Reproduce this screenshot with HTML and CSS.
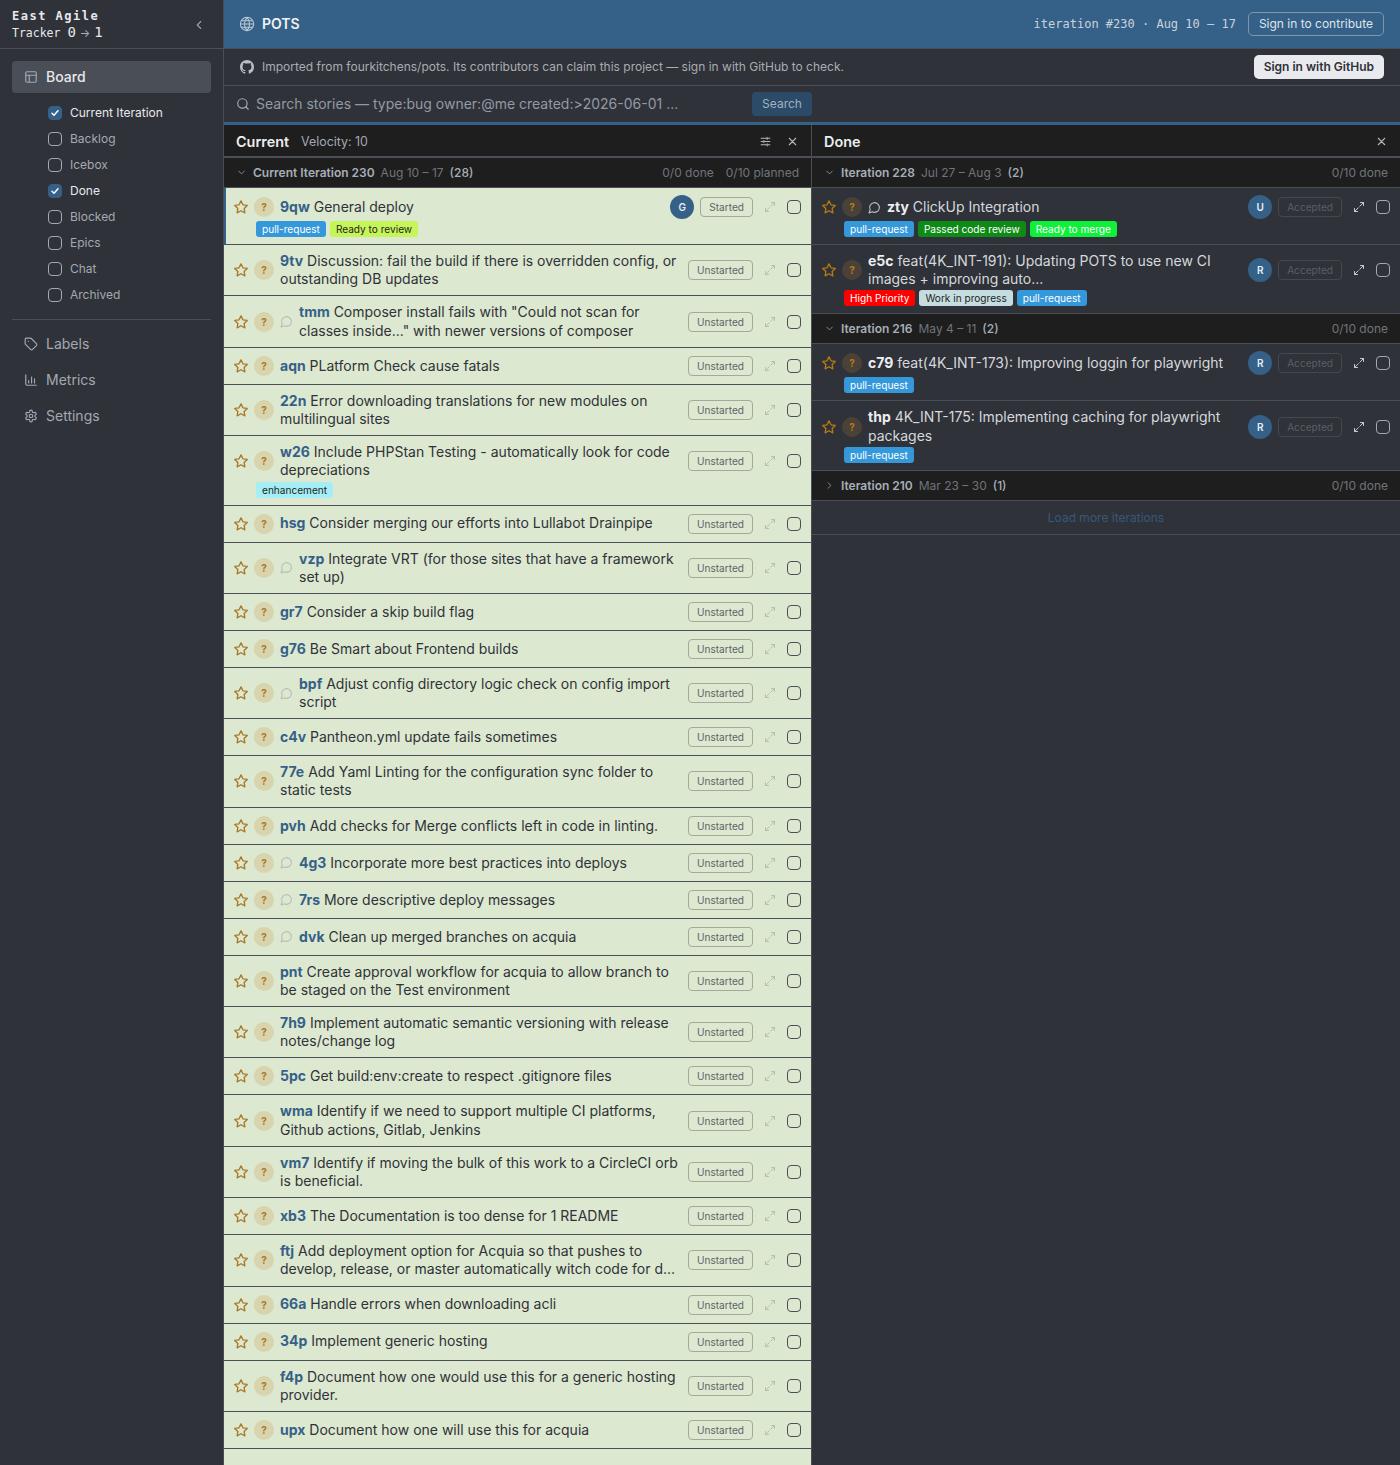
FILE: index.html
```html
<!DOCTYPE html>
<html>
<head>
    <title>POTS - East Agile Tracker</title>
    <link rel="stylesheet" href="styles.css">
</head>
<body>
    <svg class="sprites" width="0" height="0">
        <symbol id="i-star" viewBox="0 0 24 24"><path d="M12 2.8l2.9 5.9 6.5.9-4.7 4.6 1.1 6.5-5.8-3.1-5.8 3.1 1.1-6.5-4.7-4.6 6.5-.9z" fill="none" stroke="currentColor" stroke-width="2" stroke-linejoin="round"/></symbol>
        <symbol id="i-chat" viewBox="0 0 24 24"><path d="M7.9 20A9 9 0 1 0 4 16.1L2 22z" fill="none" stroke="currentColor" stroke-width="2" stroke-linejoin="round"/></symbol>
        <symbol id="i-expand" viewBox="0 0 24 24"><path d="M15 3h6v6M21 3l-7.5 7.5M9 21H3v-6M3 21l7.5-7.5" fill="none" stroke="currentColor" stroke-width="2" stroke-linecap="round" stroke-linejoin="round"/></symbol>
        <symbol id="i-close" viewBox="0 0 24 24"><path d="M18 6L6 18M6 6l12 12" fill="none" stroke="currentColor" stroke-width="2" stroke-linecap="round"/></symbol>
        <symbol id="i-down" viewBox="0 0 24 24"><path d="M6 9l6 6 6-6" fill="none" stroke="currentColor" stroke-width="2" stroke-linecap="round" stroke-linejoin="round"/></symbol>
        <symbol id="i-right" viewBox="0 0 24 24"><path d="M9 6l6 6-6 6" fill="none" stroke="currentColor" stroke-width="2" stroke-linecap="round" stroke-linejoin="round"/></symbol>
    </svg>

    <div class="app">
        <aside class="sidebar">
            <div class="brand">
                <div class="brand-text">
                    <div class="brand-top">East Agile</div>
                    <div class="brand-bottom">Tracker <span class="brand-num">0<span class="brand-arrow">→</span>1</span></div>
                </div>
                <svg class="brand-toggle" viewBox="0 0 24 24"><path d="M15 6l-6 6 6 6" fill="none" stroke="currentColor" stroke-width="2" stroke-linecap="round" stroke-linejoin="round"/></svg>
            </div>

            <nav class="nav">
                <div class="nav-item active">
                    <svg class="nav-icon" viewBox="0 0 24 24"><rect x="3" y="3" width="18" height="18" rx="2" fill="none" stroke="currentColor" stroke-width="2"/><path d="M3 9h18M9 9v12" fill="none" stroke="currentColor" stroke-width="2"/></svg>
                    Board
                </div>
                <div class="panel-list">
                    <div class="panel-opt on"><span class="check on"><svg viewBox="0 0 24 24"><path d="M6 12.5l4 4 8-9" fill="none" stroke="#fff" stroke-width="3" stroke-linecap="round" stroke-linejoin="round"/></svg></span>Current Iteration</div>
                    <div class="panel-opt"><span class="check"></span>Backlog</div>
                    <div class="panel-opt"><span class="check"></span>Icebox</div>
                    <div class="panel-opt on"><span class="check on"><svg viewBox="0 0 24 24"><path d="M6 12.5l4 4 8-9" fill="none" stroke="#fff" stroke-width="3" stroke-linecap="round" stroke-linejoin="round"/></svg></span>Done</div>
                    <div class="panel-opt"><span class="check"></span>Blocked</div>
                    <div class="panel-opt"><span class="check"></span>Epics</div>
                    <div class="panel-opt"><span class="check"></span>Chat</div>
                    <div class="panel-opt"><span class="check"></span>Archived</div>
                </div>
                <div class="nav-divider"></div>
                <div class="nav-item">
                    <svg class="nav-icon" viewBox="0 0 24 24"><path d="M12.6 2.6A2 2 0 0 0 11.2 2H4a2 2 0 0 0-2 2v7.2c0 .5.2 1 .6 1.4l8.7 8.7a2.4 2.4 0 0 0 3.4 0l6.6-6.6a2.4 2.4 0 0 0 0-3.4z" fill="none" stroke="currentColor" stroke-width="2" stroke-linejoin="round"/><circle cx="7.5" cy="7.5" r="1" fill="currentColor"/></svg>
                    Labels
                </div>
                <div class="nav-item">
                    <svg class="nav-icon" viewBox="0 0 24 24"><path d="M3 3v16a2 2 0 0 0 2 2h16M8 17v-4M13 17V7M18 17v-7" fill="none" stroke="currentColor" stroke-width="2" stroke-linecap="round"/></svg>
                    Metrics
                </div>
                <div class="nav-item">
                    <svg class="nav-icon" viewBox="0 0 24 24"><path d="M12.2 2h-.4a2 2 0 0 0-2 2v.2a2 2 0 0 1-1 1.7l-.4.3a2 2 0 0 1-2 0l-.2-.1a2 2 0 0 0-2.7.7l-.2.4a2 2 0 0 0 .7 2.7l.2.1a2 2 0 0 1 1 1.7v.6a2 2 0 0 1-1 1.7l-.2.1a2 2 0 0 0-.7 2.7l.2.4a2 2 0 0 0 2.7.7l.2-.1a2 2 0 0 1 2 0l.4.3a2 2 0 0 1 1 1.7v.2a2 2 0 0 0 2 2h.4a2 2 0 0 0 2-2v-.2a2 2 0 0 1 1-1.7l.4-.3a2 2 0 0 1 2 0l.2.1a2 2 0 0 0 2.7-.7l.2-.4a2 2 0 0 0-.7-2.7l-.2-.1a2 2 0 0 1-1-1.7v-.6a2 2 0 0 1 1-1.7l.2-.1a2 2 0 0 0 .7-2.7l-.2-.4a2 2 0 0 0-2.7-.7l-.2.1a2 2 0 0 1-2 0l-.4-.3a2 2 0 0 1-1-1.7V4a2 2 0 0 0-2-2z" fill="none" stroke="currentColor" stroke-width="2"/><circle cx="12" cy="12" r="3" fill="none" stroke="currentColor" stroke-width="2"/></svg>
                    Settings
                </div>
            </nav>
        </aside>

        <main class="main">
            <header class="topbar">
                <svg class="globe" viewBox="0 0 24 24"><circle cx="12" cy="12" r="10" fill="none" stroke="currentColor" stroke-width="1.6"/><path d="M2 12h20M12 2a15 15 0 0 1 0 20a15 15 0 0 1 0-20M3.5 7h17M3.5 17h17" fill="none" stroke="currentColor" stroke-width="1.6"/></svg>
                <span class="project-name">POTS</span>
                <span class="iteration-info">iteration #230 · Aug 10 – 17</span>
                <button class="btn-outline">Sign in to contribute</button>
            </header>

            <div class="notice">
                <svg class="github" viewBox="0 0 16 16"><path fill="currentColor" d="M8 0C3.58 0 0 3.58 0 8c0 3.54 2.29 6.53 5.47 7.59.4.07.55-.17.55-.38 0-.19-.01-.82-.01-1.49-2.01.37-2.53-.49-2.69-.94-.09-.23-.48-.94-.82-1.13-.28-.15-.68-.52-.01-.53.63-.01 1.08.58 1.23.82.72 1.21 1.87.87 2.33.66.07-.52.28-.87.51-1.07-1.78-.2-3.64-.89-3.64-3.95 0-.87.31-1.59.82-2.15-.08-.2-.36-1.02.08-2.12 0 0 .67-.21 2.2.82.64-.18 1.32-.27 2-.27s1.36.09 2 .27c1.53-1.04 2.2-.82 2.2-.82.44 1.1.16 1.92.08 2.12.51.56.82 1.27.82 2.15 0 3.07-1.87 3.75-3.65 3.95.29.25.54.73.54 1.48 0 1.07-.01 1.93-.01 2.2 0 .21.15.46.55.38A8.01 8.01 0 0 0 16 8c0-4.42-3.58-8-8-8z"/></svg>
                <span class="notice-text">Imported from fourkitchens/pots. Its contributors can claim this project — sign in with GitHub to check.</span>
                <button class="btn-light">Sign in with GitHub</button>
            </div>

            <div class="searchbar">
                <svg class="search-icon" viewBox="0 0 24 24"><circle cx="11" cy="11" r="8" fill="none" stroke="currentColor" stroke-width="2"/><path d="M21 21l-4.3-4.3" fill="none" stroke="currentColor" stroke-width="2" stroke-linecap="round"/></svg>
                <span class="search-text">Search stories — type:bug owner:@me created:&gt;2026-06-01 ...</span>
                <button class="btn-search">Search</button>
            </div>

            <div class="panels">
                <section class="panel current">
                    <div class="panel-head">
                        <span class="panel-title">Current</span>
                        <span class="velocity">Velocity: 10</span>
                        <svg class="head-icon sliders" viewBox="0 0 24 24"><path d="M4 6h9M17 6h3M4 12h3M11 12h9M4 18h9M17 18h3M15 4v4M9 10v4M15 16v4" fill="none" stroke="currentColor" stroke-width="2" stroke-linecap="round"/></svg>
                        <svg class="head-icon"><use href="#i-close"/></svg>
                    </div>
                    <div class="iter-head">
                        <svg class="iter-caret"><use href="#i-down"/></svg>
                        <span class="iter-name">Current Iteration 230</span>
                        <span class="iter-date">Aug 10 – 17</span>
                        <span class="iter-count">(28)</span>
                        <span class="iter-stats">0/0 done</span>
                        <span class="iter-stats">0/10 planned</span>
                    </div>

                    <div class="story selected">
                        <div class="story-line">
                            <svg class="star"><use href="#i-star"/></svg><span class="est">?</span>
                            <div class="story-title"><b>9qw</b> General deploy</div>
                            <span class="avatar">G</span>
                            <span class="status">Started</span>
                            <svg class="expand"><use href="#i-expand"/></svg><span class="select"></span>
                        </div>
                        <div class="labels"><span class="label l-blue">pull-request</span><span class="label l-lime">Ready to review</span></div>
                    </div>
                    <div class="story">
                        <div class="story-line">
                            <svg class="star"><use href="#i-star"/></svg><span class="est">?</span>
                            <div class="story-title"><b>9tv</b> Discussion: fail the build if there is overridden config, or outstanding DB updates</div>
                            <span class="status">Unstarted</span>
                            <svg class="expand"><use href="#i-expand"/></svg><span class="select"></span>
                        </div>
                    </div>
                    <div class="story">
                        <div class="story-line">
                            <svg class="star"><use href="#i-star"/></svg><span class="est">?</span><svg class="chat"><use href="#i-chat"/></svg>
                            <div class="story-title"><b>tmm</b> Composer install fails with "Could not scan for classes inside..." with newer versions of composer</div>
                            <span class="status">Unstarted</span>
                            <svg class="expand"><use href="#i-expand"/></svg><span class="select"></span>
                        </div>
                    </div>
                    <div class="story">
                        <div class="story-line">
                            <svg class="star"><use href="#i-star"/></svg><span class="est">?</span>
                            <div class="story-title"><b>aqn</b> PLatform Check cause fatals</div>
                            <span class="status">Unstarted</span>
                            <svg class="expand"><use href="#i-expand"/></svg><span class="select"></span>
                        </div>
                    </div>
                    <div class="story">
                        <div class="story-line">
                            <svg class="star"><use href="#i-star"/></svg><span class="est">?</span>
                            <div class="story-title"><b>22n</b> Error downloading translations for new modules on multilingual sites</div>
                            <span class="status">Unstarted</span>
                            <svg class="expand"><use href="#i-expand"/></svg><span class="select"></span>
                        </div>
                    </div>
                    <div class="story">
                        <div class="story-line">
                            <svg class="star"><use href="#i-star"/></svg><span class="est">?</span>
                            <div class="story-title"><b>w26</b> Include PHPStan Testing - automatically look for code depreciations</div>
                            <span class="status">Unstarted</span>
                            <svg class="expand"><use href="#i-expand"/></svg><span class="select"></span>
                        </div>
                        <div class="labels"><span class="label l-cyan">enhancement</span></div>
                    </div>
                    <div class="story">
                        <div class="story-line">
                            <svg class="star"><use href="#i-star"/></svg><span class="est">?</span>
                            <div class="story-title"><b>hsg</b> Consider merging our efforts into Lullabot Drainpipe</div>
                            <span class="status">Unstarted</span>
                            <svg class="expand"><use href="#i-expand"/></svg><span class="select"></span>
                        </div>
                    </div>
                    <div class="story">
                        <div class="story-line">
                            <svg class="star"><use href="#i-star"/></svg><span class="est">?</span><svg class="chat"><use href="#i-chat"/></svg>
                            <div class="story-title"><b>vzp</b> Integrate VRT (for those sites that have a framework set up)</div>
                            <span class="status">Unstarted</span>
                            <svg class="expand"><use href="#i-expand"/></svg><span class="select"></span>
                        </div>
                    </div>
                    <div class="story">
                        <div class="story-line">
                            <svg class="star"><use href="#i-star"/></svg><span class="est">?</span>
                            <div class="story-title"><b>gr7</b> Consider a skip build flag</div>
                            <span class="status">Unstarted</span>
                            <svg class="expand"><use href="#i-expand"/></svg><span class="select"></span>
                        </div>
                    </div>
                    <div class="story">
                        <div class="story-line">
                            <svg class="star"><use href="#i-star"/></svg><span class="est">?</span>
                            <div class="story-title"><b>g76</b> Be Smart about Frontend builds</div>
                            <span class="status">Unstarted</span>
                            <svg class="expand"><use href="#i-expand"/></svg><span class="select"></span>
                        </div>
                    </div>
                    <div class="story">
                        <div class="story-line">
                            <svg class="star"><use href="#i-star"/></svg><span class="est">?</span><svg class="chat"><use href="#i-chat"/></svg>
                            <div class="story-title"><b>bpf</b> Adjust config directory logic check on config import script</div>
                            <span class="status">Unstarted</span>
                            <svg class="expand"><use href="#i-expand"/></svg><span class="select"></span>
                        </div>
                    </div>
                    <div class="story">
                        <div class="story-line">
                            <svg class="star"><use href="#i-star"/></svg><span class="est">?</span>
                            <div class="story-title"><b>c4v</b> Pantheon.yml update fails sometimes</div>
                            <span class="status">Unstarted</span>
                            <svg class="expand"><use href="#i-expand"/></svg><span class="select"></span>
                        </div>
                    </div>
                    <div class="story">
                        <div class="story-line">
                            <svg class="star"><use href="#i-star"/></svg><span class="est">?</span>
                            <div class="story-title"><b>77e</b> Add Yaml Linting for the configuration sync folder to static tests</div>
                            <span class="status">Unstarted</span>
                            <svg class="expand"><use href="#i-expand"/></svg><span class="select"></span>
                        </div>
                    </div>
                    <div class="story">
                        <div class="story-line">
                            <svg class="star"><use href="#i-star"/></svg><span class="est">?</span>
                            <div class="story-title"><b>pvh</b> Add checks for Merge conflicts left in code in linting.</div>
                            <span class="status">Unstarted</span>
                            <svg class="expand"><use href="#i-expand"/></svg><span class="select"></span>
                        </div>
                    </div>
                    <div class="story">
                        <div class="story-line">
                            <svg class="star"><use href="#i-star"/></svg><span class="est">?</span><svg class="chat"><use href="#i-chat"/></svg>
                            <div class="story-title"><b>4g3</b> Incorporate more best practices into deploys</div>
                            <span class="status">Unstarted</span>
                            <svg class="expand"><use href="#i-expand"/></svg><span class="select"></span>
                        </div>
                    </div>
                    <div class="story">
                        <div class="story-line">
                            <svg class="star"><use href="#i-star"/></svg><span class="est">?</span><svg class="chat"><use href="#i-chat"/></svg>
                            <div class="story-title"><b>7rs</b> More descriptive deploy messages</div>
                            <span class="status">Unstarted</span>
                            <svg class="expand"><use href="#i-expand"/></svg><span class="select"></span>
                        </div>
                    </div>
                    <div class="story">
                        <div class="story-line">
                            <svg class="star"><use href="#i-star"/></svg><span class="est">?</span><svg class="chat"><use href="#i-chat"/></svg>
                            <div class="story-title"><b>dvk</b> Clean up merged branches on acquia</div>
                            <span class="status">Unstarted</span>
                            <svg class="expand"><use href="#i-expand"/></svg><span class="select"></span>
                        </div>
                    </div>
                    <div class="story">
                        <div class="story-line">
                            <svg class="star"><use href="#i-star"/></svg><span class="est">?</span>
                            <div class="story-title"><b>pnt</b> Create approval workflow for acquia to allow branch to be staged on the Test environment</div>
                            <span class="status">Unstarted</span>
                            <svg class="expand"><use href="#i-expand"/></svg><span class="select"></span>
                        </div>
                    </div>
                    <div class="story">
                        <div class="story-line">
                            <svg class="star"><use href="#i-star"/></svg><span class="est">?</span>
                            <div class="story-title"><b>7h9</b> Implement automatic semantic versioning with release notes/change log</div>
                            <span class="status">Unstarted</span>
                            <svg class="expand"><use href="#i-expand"/></svg><span class="select"></span>
                        </div>
                    </div>
                    <div class="story">
                        <div class="story-line">
                            <svg class="star"><use href="#i-star"/></svg><span class="est">?</span>
                            <div class="story-title"><b>5pc</b> Get build:env:create to respect .gitignore files</div>
                            <span class="status">Unstarted</span>
                            <svg class="expand"><use href="#i-expand"/></svg><span class="select"></span>
                        </div>
                    </div>
                    <div class="story">
                        <div class="story-line">
                            <svg class="star"><use href="#i-star"/></svg><span class="est">?</span>
                            <div class="story-title"><b>wma</b> Identify if we need to support multiple CI platforms, Github actions, Gitlab, Jenkins</div>
                            <span class="status">Unstarted</span>
                            <svg class="expand"><use href="#i-expand"/></svg><span class="select"></span>
                        </div>
                    </div>
                    <div class="story">
                        <div class="story-line">
                            <svg class="star"><use href="#i-star"/></svg><span class="est">?</span>
                            <div class="story-title"><b>vm7</b> Identify if moving the bulk of this work to a CircleCI orb is beneficial.</div>
                            <span class="status">Unstarted</span>
                            <svg class="expand"><use href="#i-expand"/></svg><span class="select"></span>
                        </div>
                    </div>
                    <div class="story">
                        <div class="story-line">
                            <svg class="star"><use href="#i-star"/></svg><span class="est">?</span>
                            <div class="story-title"><b>xb3</b> The Documentation is too dense for 1 README</div>
                            <span class="status">Unstarted</span>
                            <svg class="expand"><use href="#i-expand"/></svg><span class="select"></span>
                        </div>
                    </div>
                    <div class="story">
                        <div class="story-line">
                            <svg class="star"><use href="#i-star"/></svg><span class="est">?</span>
                            <div class="story-title"><b>ftj</b> Add deployment option for Acquia so that pushes to develop, release, or master automatically witch code for d...</div>
                            <span class="status">Unstarted</span>
                            <svg class="expand"><use href="#i-expand"/></svg><span class="select"></span>
                        </div>
                    </div>
                    <div class="story">
                        <div class="story-line">
                            <svg class="star"><use href="#i-star"/></svg><span class="est">?</span>
                            <div class="story-title"><b>66a</b> Handle errors when downloading acli</div>
                            <span class="status">Unstarted</span>
                            <svg class="expand"><use href="#i-expand"/></svg><span class="select"></span>
                        </div>
                    </div>
                    <div class="story">
                        <div class="story-line">
                            <svg class="star"><use href="#i-star"/></svg><span class="est">?</span>
                            <div class="story-title"><b>34p</b> Implement generic hosting</div>
                            <span class="status">Unstarted</span>
                            <svg class="expand"><use href="#i-expand"/></svg><span class="select"></span>
                        </div>
                    </div>
                    <div class="story">
                        <div class="story-line">
                            <svg class="star"><use href="#i-star"/></svg><span class="est">?</span>
                            <div class="story-title"><b>f4p</b> Document how one would use this for a generic hosting provider.</div>
                            <span class="status">Unstarted</span>
                            <svg class="expand"><use href="#i-expand"/></svg><span class="select"></span>
                        </div>
                    </div>
                    <div class="story">
                        <div class="story-line">
                            <svg class="star"><use href="#i-star"/></svg><span class="est">?</span>
                            <div class="story-title"><b>upx</b> Document how one will use this for acquia</div>
                            <span class="status">Unstarted</span>
                            <svg class="expand"><use href="#i-expand"/></svg><span class="select"></span>
                        </div>
                    </div>
                </section>

                <section class="panel done">
                    <div class="panel-head">
                        <span class="panel-title">Done</span>
                        <svg class="head-icon push"><use href="#i-close"/></svg>
                    </div>

                    <div class="iter-head">
                        <svg class="iter-caret"><use href="#i-down"/></svg>
                        <span class="iter-name">Iteration 228</span>
                        <span class="iter-date">Jul 27 – Aug 3</span>
                        <span class="iter-count">(2)</span>
                        <span class="iter-stats">0/10 done</span>
                    </div>
                    <div class="story">
                        <div class="story-line">
                            <svg class="star"><use href="#i-star"/></svg><span class="est">?</span><svg class="chat"><use href="#i-chat"/></svg>
                            <div class="story-title"><b>zty</b> ClickUp Integration</div>
                            <span class="avatar">U</span>
                            <span class="status">Accepted</span>
                            <svg class="expand"><use href="#i-expand"/></svg><span class="select"></span>
                        </div>
                        <div class="labels"><span class="label l-blue">pull-request</span><span class="label l-green">Passed code review</span><span class="label l-bright">Ready to merge</span></div>
                    </div>
                    <div class="story">
                        <div class="story-line">
                            <svg class="star"><use href="#i-star"/></svg><span class="est">?</span>
                            <div class="story-title"><b>e5c</b> feat(4K_INT-191): Updating POTS to use new CI images + improving auto...</div>
                            <span class="avatar">R</span>
                            <span class="status">Accepted</span>
                            <svg class="expand"><use href="#i-expand"/></svg><span class="select"></span>
                        </div>
                        <div class="labels"><span class="label l-red">High Priority</span><span class="label l-pale">Work in progress</span><span class="label l-blue">pull-request</span></div>
                    </div>

                    <div class="iter-head">
                        <svg class="iter-caret"><use href="#i-down"/></svg>
                        <span class="iter-name">Iteration 216</span>
                        <span class="iter-date">May 4 – 11</span>
                        <span class="iter-count">(2)</span>
                        <span class="iter-stats">0/10 done</span>
                    </div>
                    <div class="story">
                        <div class="story-line">
                            <svg class="star"><use href="#i-star"/></svg><span class="est">?</span>
                            <div class="story-title"><b>c79</b> feat(4K_INT-173): Improving loggin for playwright</div>
                            <span class="avatar">R</span>
                            <span class="status">Accepted</span>
                            <svg class="expand"><use href="#i-expand"/></svg><span class="select"></span>
                        </div>
                        <div class="labels"><span class="label l-blue">pull-request</span></div>
                    </div>
                    <div class="story">
                        <div class="story-line">
                            <svg class="star"><use href="#i-star"/></svg><span class="est">?</span>
                            <div class="story-title"><b>thp</b> 4K_INT-175: Implementing caching for playwright packages</div>
                            <span class="avatar">R</span>
                            <span class="status">Accepted</span>
                            <svg class="expand"><use href="#i-expand"/></svg><span class="select"></span>
                        </div>
                        <div class="labels"><span class="label l-blue">pull-request</span></div>
                    </div>

                    <div class="iter-head">
                        <svg class="iter-caret"><use href="#i-right"/></svg>
                        <span class="iter-name">Iteration 210</span>
                        <span class="iter-date">Mar 23 – 30</span>
                        <span class="iter-count">(1)</span>
                        <span class="iter-stats">0/10 done</span>
                    </div>
                    <div class="load-more">Load more iterations</div>
                </section>
            </div>
        </main>
    </div>
</body>
</html>
```

FILE: styles.css
```css
* {
    box-sizing: border-box;
}

html, body {
    height: 100%;
}

body {
    font-family: Inter, 'Noto Sans', Arial, sans-serif;
    font-size: 14px;
    background-color: #2f3238;
    color: #d5d8dc;
    margin: 0;
    padding: 0;
    overflow: hidden;
}

button {
    font-family: inherit;
    cursor: pointer;
}

.sprites {
    display: block;
    height: 0;
}

.app {
    display: flex;
    height: 1465px;
}

/* sidebar */

.sidebar {
    width: 224px;
    flex-shrink: 0;
    background-color: #2f3238;
    border-right: 1px solid #4a4e57;
}

.brand {
    display: flex;
    align-items: center;
    justify-content: space-between;
    height: 49px;
    padding: 1px 17px 0 12px;
    border-bottom: 1px solid #4a4e57;
}

.brand-text {
    font-family: 'DejaVu Sans Mono', 'Liberation Mono', monospace;
    color: #e8e9ec;
    line-height: 16px;
}

.brand-top {
    font-size: 12px;
    font-weight: 700;
    letter-spacing: 1.5px;
}

.brand-bottom {
    font-size: 11.5px;
}

.brand-num {
    font-size: 14px;
}

.brand-arrow {
    font-family: Inter, sans-serif;
    font-size: 11px;
    margin: 0 4px;
    color: #aeb2b8;
}

.brand-toggle {
    width: 14px;
    height: 14px;
    color: #9a9ea6;
}

.nav {
    padding: 12px 12px;
}

.nav-item {
    display: flex;
    align-items: center;
    gap: 8px;
    height: 36px;
    padding: 0 0 1px 12px;
    color: #a3a9b2;
    font-size: 14px;
}

.nav-item.active {
    height: 32px;
    background-color: #4a4e57;
    border-radius: 4px;
    color: #e8e9ec;
    font-weight: 500;
}

.nav-icon {
    width: 14px;
    height: 14px;
    flex-shrink: 0;
    color: #a3a9b2;
}

.panel-list {
    padding: 7px 0 11px 36px;
}

.panel-opt {
    display: flex;
    align-items: center;
    gap: 8px;
    height: 26px;
    padding-bottom: 1px;
    font-size: 12px;
    color: #a3a9b2;
}

.panel-opt.on {
    color: #e8e9ec;
}

.check {
    width: 14px;
    height: 14px;
    border: 1px solid #a3a9b2;
    border-radius: 4px;
    flex-shrink: 0;
}

.check.on {
    background-color: #356188;
    border-color: #356188;
}

.check svg {
    display: block;
    width: 12px;
    height: 12px;
}

.nav-divider {
    height: 1px;
    background-color: #4a4e57;
    margin-bottom: 6px;
}

/* top bars */

.main {
    flex: 1;
    min-width: 0;
    display: flex;
    flex-direction: column;
}

.topbar {
    display: flex;
    align-items: center;
    height: 49px;
    padding: 0 16px 0 15px;
    background-color: #356188;
    border-bottom: 1px solid #4a4e57;
}

.globe {
    width: 16px;
    height: 16px;
    color: #b9c8d6;
    margin-right: 7px;
}

.project-name {
    margin-bottom: 2px;
    font-weight: 600;
    color: #f0f1f3;
}

.iteration-info {
    margin-left: auto;
    margin-right: 12px;
    font-family: 'DejaVu Sans Mono', 'Liberation Mono', monospace;
    font-size: 12px;
    color: #c9d3dc;
}

.btn-outline {
    height: 24px;
    padding: 0 10px 2px;
    font-size: 12px;
    color: #dfe5ea;
    background: transparent;
    border: 1px solid #7c98b1;
    border-radius: 5px;
}

.notice {
    display: flex;
    align-items: center;
    height: 37px;
    padding: 0 16px;
    border-bottom: 1px solid #4a4e57;
}

.github {
    width: 14px;
    height: 14px;
    color: #b9bdc3;
    margin-right: 8px;
}

.notice-text {
    margin-bottom: 2px;
    font-size: 12px;
    color: #a9adb4;
}

.btn-light {
    margin-left: auto;
    height: 24px;
    padding: 0 10px 2px;
    font-size: 12px;
    font-weight: 600;
    color: #2f3238;
    background-color: #e9eaee;
    border: none;
    border-radius: 5px;
}

.searchbar {
    display: flex;
    align-items: center;
    height: 36px;
    padding: 0 0 0 12px;
}

.search-icon {
    width: 14px;
    height: 14px;
    color: #a3a9b2;
    margin-right: 6px;
}

.search-text {
    width: 496px;
    margin-bottom: 2px;
    font-size: 14px;
    color: #929aa5;
}

.btn-search {
    width: 60px;
    height: 24px;
    padding: 0 0 2px;
    font-size: 12px;
    color: #a3b0bd;
    background-color: #2b4b68;
    border: none;
    border-radius: 4px;
}

/* panels */

.panels {
    flex: 1;
    display: flex;
    min-height: 0;
    border-top: 3px solid #356188;
}

.panel {
    display: flex;
    flex-direction: column;
    min-width: 0;
}

.panel.current {
    width: 588px;
    flex-shrink: 0;
    background-color: #dde8d0;
    border-right: 1px solid #4a4e57;
}

.panel.done {
    flex: 1;
    background-color: #2f3238;
}

.panel-head {
    display: flex;
    align-items: center;
    height: 33px;
    flex-shrink: 0;
    padding: 2px 12px 0;
    background-color: #1e1e1e;
    border-bottom: 2px solid #4a4e57;
}

.panel-title {
    font-size: 14.4px;
    font-weight: 600;
    color: #eceef0;
}

.velocity {
    margin-left: 12px;
    font-size: 12.4px;
    color: #a3a9b2;
}

.head-icon {
    width: 13px;
    height: 13px;
    color: #b5b8bd;
}

.head-icon.sliders {
    margin-left: auto;
    margin-right: 14px;
}

.head-icon.push {
    margin-left: auto;
}

.iter-head {
    display: flex;
    align-items: center;
    height: 30px;
    flex-shrink: 0;
    padding: 0 12px 0 12px;
    background-color: #1e1e1e;
    border-bottom: 1px solid #4a4e57;
    font-size: 12px;
}

.iter-caret {
    width: 11px;
    height: 11px;
    color: #8f939a;
    margin-right: 6px;
}

.iter-name {
    font-weight: 600;
    color: #a7aeb7;
}

.iter-date {
    margin-left: 6px;
    color: #70747a;
}

.iter-count {
    margin-left: 6px;
    font-weight: 500;
    color: #a7aeb7;
}

.iter-stats {
    margin-left: 12px;
    color: #70747a;
}

.iter-count + .iter-stats {
    margin-left: auto;
}

/* stories */

.story {
    flex-shrink: 0;
    padding: 7px 10px 7px 9px;
    border-bottom: 1px solid #4a4e57;
}

.story.selected {
    padding-left: 7px;
    border-left: 2px solid #356188;
}

.story-line {
    display: flex;
    align-items: center;
    min-height: 22px;
}

.star {
    width: 16px;
    height: 16px;
    flex-shrink: 0;
    margin-right: 5px;
    color: #a9792a;
}

.est {
    display: flex;
    align-items: center;
    justify-content: center;
    width: 20px;
    height: 20px;
    flex-shrink: 0;
    border-radius: 50%;
    font-size: 10px;
    font-weight: 700;
    color: #a9792a;
    background-color: #d8d4ad;
}

.chat {
    width: 13px;
    height: 13px;
    flex-shrink: 0;
    margin-left: 6px;
    color: #b6bcb5;
}

.story-title {
    flex: 1;
    min-width: 0;
    margin: 0 8px 0 6px;
    font-size: 14px;
    line-height: 1.3;
    color: #2f3238;
}

.story-title b {
    font-weight: 700;
    color: #356188;
}

.avatar {
    display: flex;
    align-items: center;
    justify-content: center;
    width: 24px;
    height: 24px;
    flex-shrink: 0;
    margin-right: 6px;
    border-radius: 50%;
    font-size: 10px;
    font-weight: 600;
    color: #e8eef3;
    background-color: #356188;
}

.status {
    display: flex;
    align-items: center;
    height: 20px;
    flex-shrink: 0;
    padding: 0 8px;
    font-size: 10.1px;
    color: #5f6368;
    border: 1px solid #a3aa9c;
    border-radius: 4px;
}

.expand {
    width: 12px;
    height: 12px;
    flex-shrink: 0;
    margin: 0 11px;
    color: #b6bfb0;
}

.select {
    width: 14px;
    height: 14px;
    flex-shrink: 0;
    border: 1px solid #4a4e57;
    border-radius: 4px;
}

.labels {
    display: flex;
    gap: 4px;
    margin: 2px 0 0 23px;
}

.label {
    height: 16px;
    padding: 0 6px;
    font-size: 10.1px;
    line-height: 16px;
    border-radius: 3px;
}

.l-blue { background-color: #3498db; color: #fff; }
.l-lime { background-color: #c6f55a; color: #1e1e1e; }
.l-cyan { background-color: #a5eef5; color: #1e1e1e; }
.l-green { background-color: #0e8a16; color: #fff; }
.l-bright { background-color: #0ef03a; color: #fff; }
.l-red { background-color: #ff0000; color: #fff; }
.l-pale { background-color: #c5dde0; color: #1e1e1e; }

/* dark panel overrides */

.done .story-title {
    color: #d5d8dc;
}

.done .story-title b {
    color: #eceef0;
}

.done .star {
    color: #b67a12;
}

.done .est {
    color: #b67a12;
    background-color: #4a4238;
}

.done .chat {
    color: #c2c5c9;
}

.done .status {
    color: #5a5e64;
    border-color: #44484f;
}

.done .expand {
    color: #c5c8cc;
}

.done .select {
    border-color: #a3a9b2;
}

.load-more {
    height: 34px;
    flex-shrink: 0;
    line-height: 33px;
    text-align: center;
    font-size: 12px;
    color: #35597c;
    border-bottom: 1px solid #4a4e57;
}
```
